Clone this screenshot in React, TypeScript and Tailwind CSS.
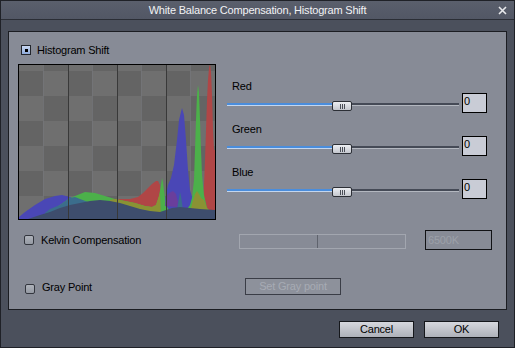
import React from "react";

function Checkbox({ checked }: { checked?: boolean }) {
  if (checked) {
    return (
      <div className="w-[10px] h-[10px] border border-[#22252c] bg-gradient-to-b from-[#c9d8f2] to-[#8eaada] flex items-center justify-center shrink-0">
        <div className="w-[3px] h-[3px] bg-black" />
      </div>
    );
  }
  return (
    <div className="w-[10px] h-[10px] border border-[#33363e] rounded-[2px] bg-gradient-to-b from-[#aeb2ba] to-[#959aa3] shrink-0" />
  );
}

function Histogram() {
  return (
    <div className="w-[198px] h-[156px] border border-black shrink-0">
      <svg width="196" height="154" viewBox="0 0 196 154" className="block">
        <defs>
          <pattern id="chk" x="0" y="6" width="49" height="50" patternUnits="userSpaceOnUse">
            <rect x="0" y="0" width="24.5" height="25" fill="#646464" />
            <rect x="24.5" y="0" width="24.5" height="25" fill="#6f6f6f" />
            <rect x="0" y="25" width="24.5" height="25" fill="#6f6f6f" />
            <rect x="24.5" y="25" width="24.5" height="25" fill="#646464" />
          </pattern>
        </defs>
        <rect width="196" height="154" fill="url(#chk)" />
        <g transform="translate(-19 -65)">
          <polygon fill="#b04646" points="108,219 110,200 120,199 130,199 138,197 143,193 148,188 152,184 156,181 158,181 160,185 161,195 162,219" />
          <polygon fill="#b04646" points="186,219 190,212 195,208 200,205 203,200 204,185 205,160 206,130 207,100 208,80 209,68 210,64 211,72 212,95 213,130 214,150 215,150 215,219" />
          <polygon fill="#4a47b6" points="19,217 25,212 35,205 45,199 55,196 62,195 70,197 80,200 90,205 100,209 120,211 150,212 163,212 166,195 168,185 171,178 174,165 177,140 179,120 181,112 182,108 184,115 186,140 188,170 190,190 193,200 196,205 200,208 215,212 215,219 19,219" />
          <polygon fill="#4cb04a" points="38,219 50,211 60,205 70,198 80,194 85,192 95,193 105,196 115,199 125,201 135,203 145,206 152,207 156,205 159,196 161,185 162,178 163,182 164,190 166,205 170,212 185,212 190,205 192,198 194,180 195,150 196,120 197,95 198,85 199,92 200,120 201,150 202,175 204,195 207,208 212,213 215,213 215,219" />
          <polygon fill="#8a9234" points="110,200 115,199 125,201 135,203 145,206 152,207 156,205 159,196 160,193 161,219 110,219" />
          <polygon fill="#8a9234" points="190,219 191,208 193,200 195,194 197,191 199,194 201,198 204,200 207,208 212,213 215,213 215,219" />
          <polygon fill="#3b6d8c" points="45,213 50,209 60,205 70,198 75,197 80,199 88,202 95,205 100,208 100,219 45,219" />
          <polygon fill="#3b6d8c" points="177,210 179,198 180,192 181,196 183,210" />
          <polygon fill="#6a3e9c" points="165,206 166,197 169,193 173,191 176,194 178,202 177,207" />
          <polygon fill="#3e4d6d" points="28,219 40,215 50,212 60,208 70,205 80,203 90,201 100,200 110,201 120,203 130,206 140,209 150,211 160,212 166,210 172,208 180,207 190,208 200,209 215,210 215,219" />
        </g>
        <rect x="49" y="0" width="1" height="154" fill="#393939" />
        <rect x="98" y="0" width="1" height="154" fill="#393939" />
        <rect x="147" y="0" width="1" height="154" fill="#393939" />
      </svg>
    </div>
  );
}

function Slider({ label }: { label: string }) {
  return (
    <div className="flex flex-col">
      <div className="h-[13px] leading-[13px] pl-[5px] text-black">{label}</div>
      <div className="flex h-[20px]">
        <div className="relative w-[232px] h-[20px]">
          <div className="pt-[10px] flex flex-col">
            <div className="flex h-[2px]">
              <div className="w-[110px] bg-[#4a8ddc]" />
              <div className="flex-1 bg-[#454a56]" />
            </div>
            <div className="flex h-[1px]">
              <div className="w-[110px] bg-[#c4d6ee]" />
              <div className="flex-1 bg-[#b3b7bf]" />
            </div>
          </div>
          <div className="absolute left-[105px] top-[8px] w-[20px] h-[10px] border border-[#2c2f36] rounded-[2px] bg-gradient-to-b from-[#eceef2] to-[#c4c7ce] flex items-center justify-center gap-[1px]">
            <div className="w-[1px] h-[5px] bg-[#4a4e57]" />
            <div className="w-[1px] h-[5px] bg-[#4a4e57]" />
            <div className="w-[1px] h-[5px] bg-[#4a4e57]" />
          </div>
        </div>
        <div className="ml-[3px] w-[25px] h-[20px] border border-black bg-[#c9ccd6] pl-[1px] pt-[1px] leading-[13px] text-black">
          0
        </div>
      </div>
    </div>
  );
}

export default function App() {
  return (
    <div className="w-[515px] h-[348px] bg-[#4b505c] border border-[#1f2127] flex flex-col font-['Liberation_Sans',Arial,sans-serif] text-[11px] tracking-[-0.2px] leading-[13px] overflow-hidden">
      <div className="h-[19px] shrink-0 border-b border-[#2b2e36] bg-gradient-to-b from-[#5a5f6c] to-[#525765] grid grid-cols-[1fr_auto_1fr] items-center">
        <div />
        <div className="text-[#f2f2f4] leading-[13px]">White Balance Compensation, Histogram Shift</div>
        <div className="flex justify-end pr-[7px]">
          <svg width="9" height="9" viewBox="0 0 9 9">
            <path d="M1 1 L8 8 M8 1 L1 8" stroke="#e8e9ec" strokeWidth="1.6" />
          </svg>
        </div>
      </div>
      <div className="flex-1 flex flex-col">
        <div className="mt-[11px] ml-[7px] w-[499px] h-[279px] border border-[#1b1d22] bg-[#878b96] flex flex-col">
          <div className="mt-[12px] pl-[12px] flex items-start h-[13px]">
            <div className="mt-[1px]">
              <Checkbox checked />
            </div>
            <div className="ml-[6px] text-black">Histogram Shift</div>
          </div>
          <div className="mt-[7px] pl-[9px] flex items-start">
            <Histogram />
            <div className="ml-[11px] mt-[16px] flex flex-col gap-[10px]">
              <Slider label="Red" />
              <Slider label="Green" />
              <Slider label="Blue" />
            </div>
          </div>
          <div className="mt-[10px] pl-[15px] flex items-center h-[20px]">
            <Checkbox />
            <div className="ml-[7px] w-[198px] text-black">Kelvin Compensation</div>
            <div className="mt-[2px] w-[167px] h-[15px] border border-[#a2a6af] flex">
              <div className="w-[78px] h-full border-r border-[#5f636d]" />
            </div>
            <div className="ml-[19px] w-[67px] h-[20px] border border-[#111215] pl-[2px] flex items-center text-[#9ca0a9]">
              6500K
            </div>
          </div>
          <div className="mt-[28px] pl-[16px] flex items-start h-[17px]">
            <div className="mt-[6px]">
              <Checkbox />
            </div>
            <div className="ml-[7px] mt-[3px] w-[203px] text-black">Gray Point</div>
            <div className="w-[96px] h-[17px] border border-[#3a3d46] bg-[#8d919b] flex items-center justify-center text-[#a7abb4]">
              Set Gray point
            </div>
          </div>
        </div>
        <div className="mt-[11px] pr-[15px] flex justify-end gap-[10px]">
          <div className="w-[75px] h-[17px] border border-[#15171b] bg-gradient-to-b from-[#d6d8de] to-[#aeb1b9] flex items-center justify-center text-black">
            Cancel
          </div>
          <div className="w-[75px] h-[17px] border border-[#15171b] bg-gradient-to-b from-[#d6d8de] to-[#aeb1b9] flex items-center justify-center text-black">
            OK
          </div>
        </div>
      </div>
    </div>
  );
}
